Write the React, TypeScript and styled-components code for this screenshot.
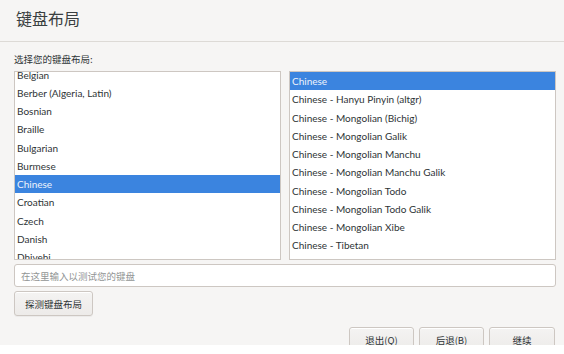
import React from "react";
import styled, { createGlobalStyle } from "styled-components";

const Global = createGlobalStyle`
  html, body { margin: 0; padding: 0; background: #ffffff; }
  body { font-family: "Lato", "Noto Sans CJK SC", sans-serif; color: #2e3436; }
  * { box-sizing: border-box; }
`;

const Window = styled.div`
  width: 564px;
  height: 345px;
  background: #f6f5f4;
  overflow: hidden;
  display: flex;
  flex-direction: column;
`;

const Header = styled.div`
  flex-shrink: 0;
  height: 42px;
  border-bottom: 1px solid #dddad6;
  display: flex;
  align-items: center;
  padding-left: 16px;
  padding-bottom: 6px;
`;

const Title = styled.h1`
  margin: 0;
  font-family: "Noto Sans CJK SC", sans-serif;
  font-weight: 400;
  font-size: 16px;
  color: #3a3f41;
`;

const Body = styled.div`
  flex-shrink: 0;
  padding: 10px 8px 0 14px;
  display: flex;
  flex-direction: column;
`;

const Label = styled.div`
  font-family: "Noto Sans CJK SC", sans-serif;
  font-size: 9.5px;
  line-height: 14px;
  height: 19px;
  color: #2e3436;
`;

const Lists = styled.div`
  display: grid;
  grid-template-columns: 267px 267px;
  column-gap: 8px;
  height: 189px;
`;

const ListBox = styled.div`
  border: 1px solid #cdc7c2;
  background: #ffffff;
  overflow: hidden;
`;

const ListInner = styled.div<{ $offset: number }>`
  margin-top: ${(p) => -p.$offset}px;
  display: flex;
  flex-direction: column;
`;

const Row = styled.div<{ $selected?: boolean }>`
  flex-shrink: 0;
  height: 18.25px;
  line-height: 18.25px;
  padding-left: 2px;
  font-family: "Lato", sans-serif;
  font-size: 10px;
  white-space: nowrap;
  color: ${(p) => (p.$selected ? "#eef3fb" : "#2e3436")};
  background: ${(p) => (p.$selected ? "#3b84df" : "transparent")};
`;

const Input = styled.div`
  margin-top: 4px;
  height: 23px;
  border: 1px solid #cdc7c2;
  border-radius: 3px;
  background: #ffffff;
  display: flex;
  align-items: center;
  padding-left: 6px;
  font-family: "Noto Sans CJK SC", sans-serif;
  font-size: 9.5px;
  color: #929595;
`;

const Button = styled.div<{ $w: number }>`
  width: ${(p) => p.$w}px;
  height: 25px;
  border: 1px solid #cdc7c2;
  border-radius: 3px;
  background: linear-gradient(#f4f3f2, #edebe9);
  box-shadow: inset 0 1px #ffffff, 0 1px rgba(0,0,0,0.04);
  display: flex;
  align-items: center;
  justify-content: center;
  font-family: "Noto Sans CJK SC", sans-serif;
  font-size: 9.5px;
  color: #2e3436;
  flex-shrink: 0;
`;

const DetectRow = styled.div`
  margin-top: 4px;
  display: flex;
`;

const ButtonRow = styled.div`
  margin-top: 11px;
  display: flex;
  justify-content: flex-end;
  gap: 5px;
  padding-right: 1px;
`;

const left = [
  "Belgian",
  "Berber (Algeria, Latin)",
  "Bosnian",
  "Braille",
  "Bulgarian",
  "Burmese",
  "Chinese",
  "Croatian",
  "Czech",
  "Danish",
  "Dhivehi",
];

const right = [
  "Chinese",
  "Chinese - Hanyu Pinyin (altgr)",
  "Chinese - Mongolian (Bichig)",
  "Chinese - Mongolian Galik",
  "Chinese - Mongolian Manchu",
  "Chinese - Mongolian Manchu Galik",
  "Chinese - Mongolian Todo",
  "Chinese - Mongolian Todo Galik",
  "Chinese - Mongolian Xibe",
  "Chinese - Tibetan",
];

export default function App() {
  return (
    <>
      <Global />
      <Window>
        <Header>
          <Title>键盘布局</Title>
        </Header>
        <Body>
          <Label>选择您的键盘布局:</Label>
          <Lists>
            <ListBox>
              <ListInner $offset={6.5}>
                {left.map((l) => (
                  <Row key={l} $selected={l === "Chinese"}>
                    {l}
                  </Row>
                ))}
              </ListInner>
            </ListBox>
            <ListBox>
              <ListInner $offset={0}>
                {right.map((l, i) => (
                  <Row key={l} $selected={i === 0}>
                    {l}
                  </Row>
                ))}
              </ListInner>
            </ListBox>
          </Lists>
          <Input>在这里输入以测试您的键盘</Input>
          <DetectRow>
            <Button $w={79}>探测键盘布局</Button>
          </DetectRow>
          <ButtonRow>
            <Button $w={65}>退出(Q)</Button>
            <Button $w={65}>后退(B)</Button>
            <Button $w={66}>继续</Button>
          </ButtonRow>
        </Body>
      </Window>
    </>
  );
}
